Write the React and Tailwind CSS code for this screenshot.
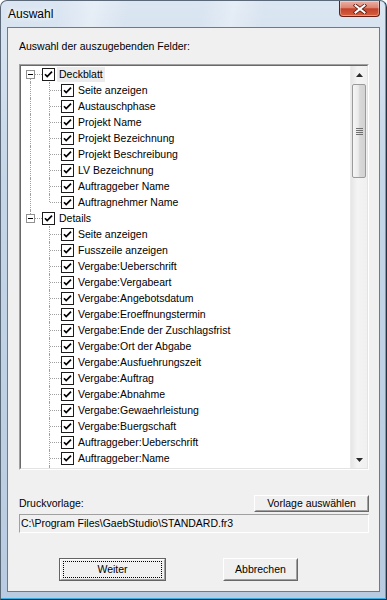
import React from 'react';

const FONT = "[font-family:'Liberation_Sans',Arial,sans-serif]";

const TREE = [
  {
    label: 'Deckblatt',
    selected: true,
    children: [
      'Seite anzeigen',
      'Austauschphase',
      'Projekt Name',
      'Projekt Bezeichnung',
      'Projekt Beschreibung',
      'LV Bezeichnung',
      'Auftraggeber Name',
      'Auftragnehmer Name'
    ]
  },
  {
    label: 'Details',
    children: [
      'Seite anzeigen',
      'Fusszeile anzeigen',
      'Vergabe:Ueberschrift',
      'Vergabe:Vergabeart',
      'Vergabe:Angebotsdatum',
      'Vergabe:Eroeffnungstermin',
      'Vergabe:Ende der Zuschlagsfrist',
      'Vergabe:Ort der Abgabe',
      'Vergabe:Ausfuehrungszeit',
      'Vergabe:Auftrag',
      'Vergabe:Abnahme',
      'Vergabe:Gewaehrleistung',
      'Vergabe:Buergschaft',
      'Auftraggeber:Ueberschrift',
      'Auftraggeber:Name',
      'Auftraggeber:Anschrift'
    ]
  }
];

const Check = () => (
  <svg width="13" height="13" viewBox="0 0 13 13" className="shrink-0">
    <rect x="0.5" y="0.5" width="12" height="12" fill="#fff" stroke="#1c1c1c" />
    <path d="M3 6.2 L5.2 8.6 L10 3.6" fill="none" stroke="#000" strokeWidth="1.7" />
  </svg>
);

// one indent column of the tree (19px), draws the dotted connector lines
const Cell = ({ kind }) => {
  const line = 'absolute border-dotted border-[#a0a0a0]';
  return (
    <div className="relative w-[19px] h-full shrink-0">
      {(kind === 'pipe' || kind === 'tee') && <span className={`${line} left-[7px] top-0 bottom-0 border-l`} />}
      {kind === 'elbow' && <span className={`${line} left-[7px] top-0 h-[8px] border-l`} />}
      {kind === 'rootFirst' && <span className={`${line} left-[7px] top-[8px] bottom-0 border-l`} />}
      {kind === 'rootLast' && <span className={`${line} left-[7px] top-0 h-[8px] border-l`} />}
      {kind !== 'pipe' && kind !== 'blank' && <span className={`${line} left-[8px] right-0 top-[8px] border-t`} />}
      {(kind === 'rootFirst' || kind === 'rootLast') && (
        <span className="absolute left-[3px] top-[4px] w-[9px] h-[9px] border border-[#919191] bg-white">
          <span className="absolute left-px right-px top-[3px] h-px bg-black" />
        </span>
      )}
    </div>
  );
};

const Row = ({ cells, label, selected }) => (
  <div className="flex items-center h-[16px] shrink-0">
    {cells.map((c, i) => (
      <Cell key={i} kind={c} />
    ))}
    <Check />
    <span className={`ml-[2px] px-[2px] h-[15px] leading-[15px] whitespace-nowrap ${selected ? 'bg-[#ececec]' : ''}`}>
      {label}
    </span>
  </div>
);

const Arrow = ({ down }) => (
  <svg width="7" height="4" viewBox="0 0 7 4">
    <path d={down ? 'M0 0 H7 L3.5 4 Z' : 'M0 4 H7 L3.5 0 Z'} fill="#2a2a2a" />
  </svg>
);

const Scrollbar = () => (
  <div className="w-[17px] flex flex-col bg-[linear-gradient(to_right,#e6e6e6,#f4f4f4_40%,#f0f0f0)] border-l border-[#ececec]">
    <div className="h-[17px] flex items-center justify-center">
      <Arrow />
    </div>
    <div className="mt-px mx-px h-[94px] rounded-[2px] border border-[#9a9a9a] bg-[linear-gradient(to_right,#f6f6f6,#e9e9e9_45%,#d9d9d9_55%,#d2d2d2)] flex flex-col items-center justify-center gap-[1px]">
      <span className="w-[7px] h-px bg-[#6f6f6f]" />
      <span className="w-[7px] h-px bg-[#6f6f6f]" />
      <span className="w-[7px] h-px bg-[#6f6f6f]" />
      <span className="w-[7px] h-px bg-[#6f6f6f]" />
    </div>
    <div className="flex-1" />
    <div className="h-[17px] flex items-center justify-center">
      <Arrow down />
    </div>
  </div>
);

const ClassicButton = ({ className = '', children }) => (
  <div className={`border border-t-white border-l-white border-b-[#696969] border-r-[#696969] bg-[#f0f0f0] ${className}`}>
    <div className="h-full border border-t-[#f0f0f0] border-l-[#f0f0f0] border-b-[#a0a0a0] border-r-[#a0a0a0] flex items-center justify-center">
      {children}
    </div>
  </div>
);

export default function App() {
  const rows = [];
  TREE.forEach((root, ri) => {
    const lastRoot = ri === TREE.length - 1;
    rows.push(
      <Row key={`r${ri}`} cells={[ri === 0 ? 'rootFirst' : 'rootLast']} label={root.label} selected={root.selected} />
    );
    root.children.forEach((child, ci) => {
      const lastChild = ci === root.children.length - 1 && !lastRoot;
      rows.push(
        <Row key={`r${ri}c${ci}`} cells={[lastRoot ? 'blank' : 'pipe', lastChild ? 'elbow' : 'tee']} label={child} />
      );
    });
  });

  return (
    <div className={`${FONT} w-[387px] h-[600px] flex flex-col rounded-t-[7px] border border-[#5a6878] border-r-[#253040] border-b-[#253040] shadow-[inset_-1px_-1px_0_#3aaee2] bg-[linear-gradient(to_bottom,#dbe6f2,#c5d6e8_30%,#b8cbe0)] overflow-hidden text-black`}>
      {/* title bar */}
      <div className="h-[26px] flex items-start justify-between pl-[7px] pr-[6px] bg-[linear-gradient(100deg,transparent_15%,rgba(255,255,255,0.35)_24%,transparent_33%,transparent_52%,rgba(255,255,255,0.3)_60%,transparent_68%)]">
        <span className="self-center text-[12px] leading-[15px] [text-shadow:0_0_5px_#fff,0_0_8px_#fff]">Auswahl</span>
        <div className="w-[41px] h-[16px] rounded-b-[4px] border border-t-0 border-[#6b1d12] bg-[linear-gradient(to_bottom,#eab2a6_0%,#dc8370_45%,#c3412a_52%,#d5613f_100%)] flex items-center justify-center shadow-[inset_0_0_0_1px_rgba(255,255,255,0.35)]">
          <svg width="14" height="10" viewBox="0 0 14 10">
            <path d="M2.5 1.5 L11.5 8.5 M11.5 1.5 L2.5 8.5" stroke="#5a1a10" strokeWidth="3.6" strokeLinecap="square" />
            <path d="M2.5 1.5 L11.5 8.5 M11.5 1.5 L2.5 8.5" stroke="#fff" strokeWidth="2" strokeLinecap="square" />
          </svg>
        </div>
      </div>

      {/* client area */}
      <div className="flex-1 mx-[6px] mb-[7px] border border-[#6b7a8c] bg-[#f0f0f0] flex flex-col pl-[11px] pr-[10px] pt-[12px] text-[10.5px]">
        <div className="h-[13px] leading-[13px]">Auswahl der auszugebenden Felder:</div>

        <div className="mt-[11px] h-[406px] border border-t-[#a0a0a0] border-l-[#a0a0a0] border-b-white border-r-white">
          <div className="h-full border border-t-[#696969] border-l-[#696969] border-b-[#e3e3e3] border-r-[#e3e3e3] bg-white flex">
            <div className="flex-1 overflow-hidden flex flex-col pl-[2px]">{rows}</div>
            <Scrollbar />
          </div>
        </div>

        <div className="mt-[25px] h-[17px] flex items-center justify-between">
          <span>Druckvorlage:</span>
          <ClassicButton className="w-[115px] h-[17px]">Vorlage auswählen</ClassicButton>
        </div>

        <div className="mt-[2px] h-[19px] border border-t-[#a0a0a0] border-l-[#a0a0a0] border-b-white border-r-white flex items-center pl-px">
          C:\Program Files\GaebStudio\STANDARD.fr3
        </div>

        <div className="mt-[25px] flex pl-[40px] gap-[57px]">
          <div className="w-[107px] h-[23px] border border-[#646464] bg-[#f0f0f0]">
            <div className="h-full border border-t-white border-l-white border-b-[#a0a0a0] border-r-[#a0a0a0] px-[2px] py-px">
              <div className="h-full border border-dotted border-black flex items-center justify-center">Weiter</div>
            </div>
          </div>
          <ClassicButton className="w-[75px] h-[23px]">Abbrechen</ClassicButton>
        </div>
      </div>
    </div>
  );
}
